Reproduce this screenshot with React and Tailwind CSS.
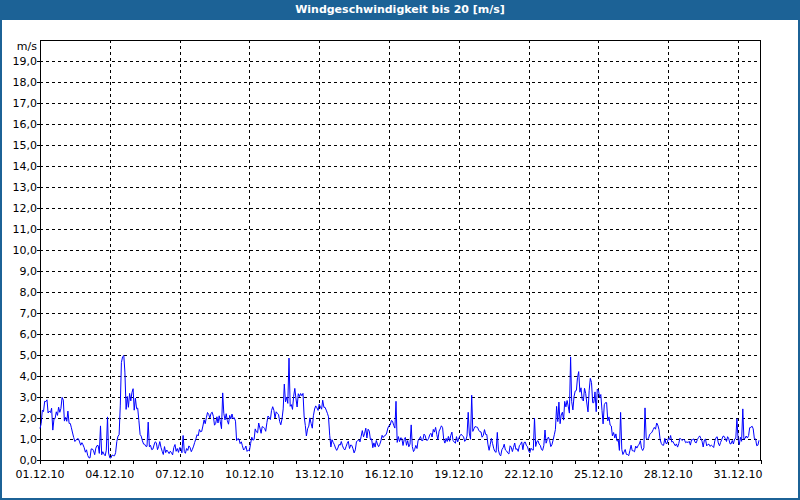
import React from "react";

const keys = [
  [0, 2.0], [0.2, 2.6], [0.6, 1.5], [0.9, 2.6], [1.3, 1.6], [1.6, 0.8], [2.0, 0.35], [2.7, 0.5],
  [3.0, 0.2], [3.2, 0.4], [3.4, 1.4], [3.5, 4.5], [3.7, 2.5], [4.0, 3.0], [4.3, 1.0], [4.6, 0.5],
  [5.2, 0.7], [5.6, 0.3], [6.0, 0.6], [6.5, 0.4], [7.2, 2.0], [7.5, 1.6], [8.2, 2.3], [8.5, 1.0],
  [9.0, 0.5], [9.3, 1.5], [10.3, 2.3], [11.0, 3.0], [11.5, 1.6], [12.2, 2.8], [12.6, 0.8],
  [13.5, 0.6], [14.0, 1.4], [14.5, 0.6], [15.0, 1.6], [15.5, 1.0], [16.0, 0.5], [17.0, 1.5],
  [18.0, 0.8], [19.0, 1.5], [19.5, 0.5], [20.0, 0.5], [21.0, 0.7], [22.0, 0.8], [22.5, 2.5],
  [23.3, 3.6], [24.0, 3.0], [24.5, 1.5], [25.0, 0.5], [25.5, 0.5], [26.0, 0.8], [26.5, 1.4],
  [27.0, 0.9], [28.0, 0.9], [29.0, 0.8], [30.0, 0.9], [30.5, 1.3], [31, 0.7],
];

let seed = 7;
const rand = () => {
  seed = (seed * 16807) % 2147483647;
  return seed / 2147483647;
};

const X0 = 40, Y0 = 460, DAY = 23.27, UNIT = 21;

// noisy wind series: interpolated envelope + random jitter and gusts
const points = [];
let prev = 0;
for (let d = 0; d <= 30.95; d += 0.05) {
  let i = 0;
  while (i < keys.length - 2 && keys[i + 1][0] < d) i++;
  const [a, va] = keys[i], [b, vb] = keys[i + 1];
  const t = Math.min(1, Math.max(0, (d - a) / (b - a)));
  const noise = (rand() - 0.5) * 1.0 * Math.max(0.5, va / 2);
  prev = prev * 0.4 + noise;
  let v = va + (vb - va) * t + prev;
  if (rand() < 0.03) v += 0.8 + rand();
  v = Math.max(0.1, v);
  points.push(`${(X0 + d * DAY).toFixed(1)},${(Y0 - v * UNIT).toFixed(1)}`);
}

const yLabels = Array.from({ length: 20 }, (_, i) => i);
const xLabels = ["01.12.10", "04.12.10", "07.12.10", "10.12.10", "13.12.10", "16.12.10", "19.12.10", "22.12.10", "25.12.10", "28.12.10", "31.12.10"];

export default function App() {
  return (
    <div className="w-[800px] h-[500px] flex flex-col bg-[#1c6296]" style={{ fontFamily: "'DejaVu Sans', Verdana, sans-serif" }}>
      <div className="h-[20px] flex items-center justify-center text-white text-[11px] font-bold">
        Windgeschwindigkeit bis 20 [m/s]
      </div>
      <div className="flex-1 mx-[2px] mb-[2px] bg-white">
        <svg width="796" height="478" viewBox="2 20 796 478" className="block">
          <g fontSize="11" fill="#000">
            <text x="37" y="50" textAnchor="end">m/s</text>
            {yLabels.map((v) => (
              <text key={v} x="37" y={Y0 - v * UNIT + 4} textAnchor="end">{v},0</text>
            ))}
            {xLabels.map((l, i) => (
              <text key={l} x={X0 + i * 3 * DAY} y="478" textAnchor="middle">{l}</text>
            ))}
          </g>
          <g stroke="#000" strokeDasharray="3 3" shapeRendering="crispEdges">
            {yLabels.slice(1).map((v) => (
              <line key={v} x1={X0} x2={761} y1={Y0 - v * UNIT + 0.5} y2={Y0 - v * UNIT + 0.5} />
            ))}
            {xLabels.slice(1).map((l, i) => (
              <line key={l} x1={Math.round(X0 + (i + 1) * 3 * DAY) + 0.5} x2={Math.round(X0 + (i + 1) * 3 * DAY) + 0.5} y1={40} y2={Y0} />
            ))}
          </g>
          <g stroke="#000" shapeRendering="crispEdges" fill="none">
            <rect x={X0 + 0.5} y={40.5} width={720} height={Y0 - 40} />
            {Array.from({ length: 32 }, (_, i) => (
              <line key={i} x1={Math.round(X0 + i * DAY) + 0.5} x2={Math.round(X0 + i * DAY) + 0.5} y1={Y0} y2={Y0 + 4} />
            ))}
            {yLabels.map((v) => (
              <line key={v} x1={X0 - 3} x2={X0} y1={Y0 - v * UNIT + 0.5} y2={Y0 - v * UNIT + 0.5} />
            ))}
          </g>
          <polyline points={points.join(" ")} fill="none" stroke="#0000ff" strokeWidth="1" />
        </svg>
      </div>
    </div>
  );
}
